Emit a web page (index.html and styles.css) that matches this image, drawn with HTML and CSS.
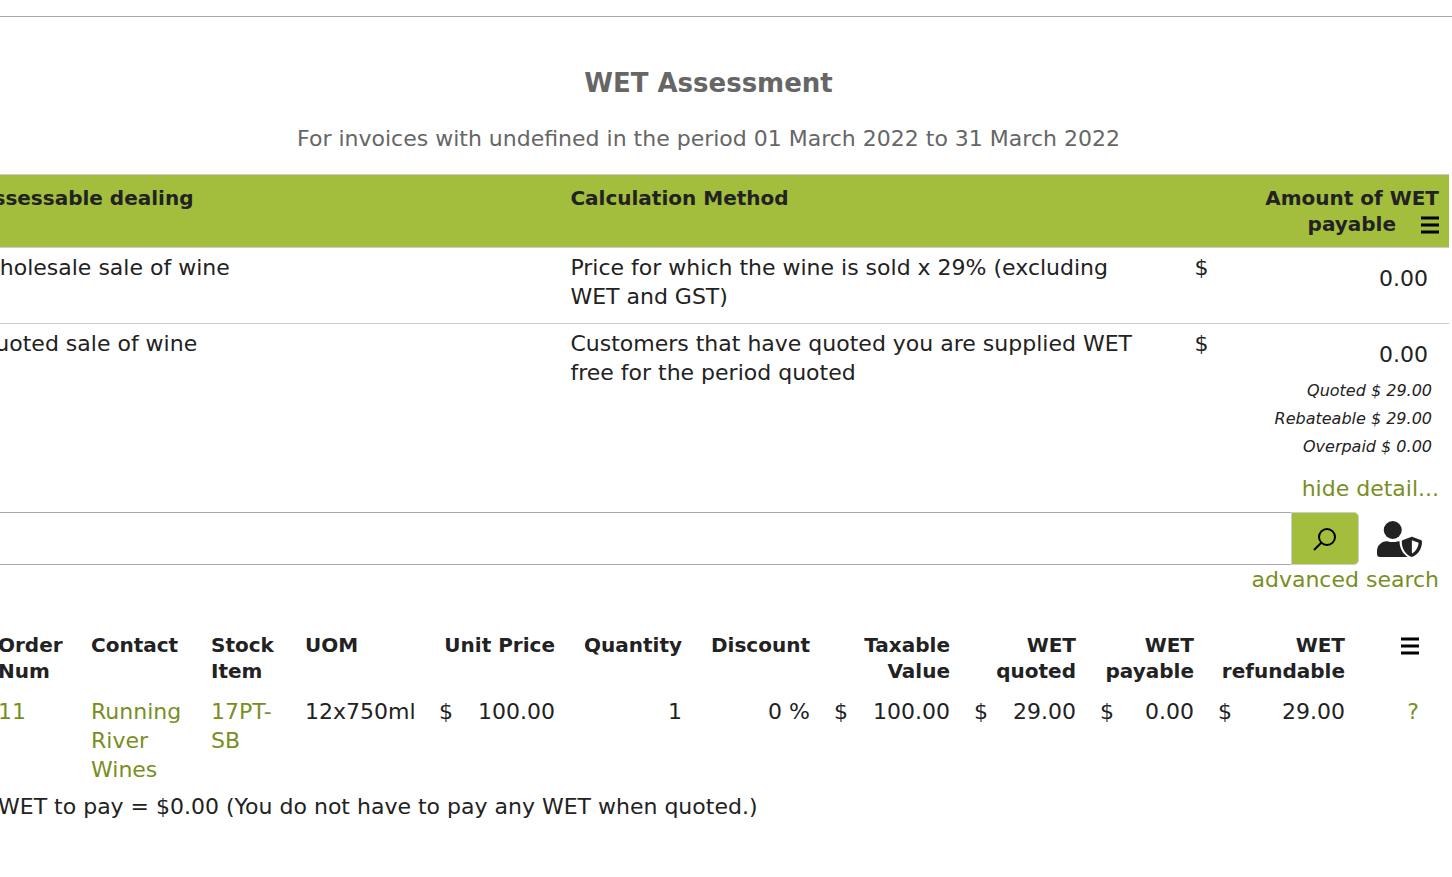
FILE: index.html
```html
<!DOCTYPE html>
<html lang="en">
<head>
    <meta charset="UTF-8">
    <meta name="viewport" content="width=device-width, initial-scale=1.0">
    <title>WET Assessment</title>
    <link rel="stylesheet" href="styles.css">
</head>
<body>
    <hr class="divider">
    <main class="report">
        <h1 class="title">WET Assessment</h1>
        <p class="subtitle">For invoices with undefined in the period 01 March 2022 to 31 March 2022</p>

        <table class="assessment">
            <colgroup>
                <col class="col-dealing">
                <col class="col-method">
                <col>
            </colgroup>
            <thead>
                <tr>
                    <th>Assessable dealing</th>
                    <th>Calculation Method</th>
                    <th class="right">
                        Amount of WET<br>payable
                        <button class="menu-button" type="button" aria-label="Table menu">
                            <svg class="menu-icon" viewBox="0 0 18 18"><path d="M0 2h18M0 9h18M0 16h18"/></svg>
                        </button>
                    </th>
                </tr>
            </thead>
            <tbody>
                <tr>
                    <td>Wholesale sale of wine</td>
                    <td class="method">Price for which the wine is sold x 29% (excluding WET and GST)</td>
                    <td>
                        <div class="money"><span>$</span><span class="amount">0.00</span></div>
                    </td>
                </tr>
                <tr>
                    <td>Quoted sale of wine</td>
                    <td class="method">Customers that have quoted you are supplied WET free for the period quoted</td>
                    <td>
                        <div class="money"><span>$</span><span class="amount">0.00</span></div>
                        <ul class="breakdown">
                            <li>Quoted $ 29.00</li>
                            <li>Rebateable $ 29.00</li>
                            <li>Overpaid $ 0.00</li>
                        </ul>
                        <a class="toggle" href="#detail">hide detail...</a>
                    </td>
                </tr>
            </tbody>
        </table>

        <section class="detail" id="detail">
            <form class="search">
                <input class="search-input" type="text" aria-label="Search">
                <button class="search-button" type="submit" aria-label="Search">
                    <svg class="search-icon" viewBox="0 0 24 24"><circle cx="14" cy="10" r="8"/><path d="M8 16l-7 7"/></svg>
                </button>
                <svg class="user-icon" viewBox="0 0 640 512"><path d="M622.3 271.1l-115.2-45c-4.1-1.6-12.6-3.7-22.2 0l-115.2 45c-10.7 4.2-17.7 14-17.7 24.9 0 111.6 68.7 188.8 132.9 213.9 9.6 3.7 18 1.6 22.2 0C558.4 489.9 640 420.5 640 296c0-10.9-7-20.7-17.7-24.9zM496 462.4V273.3l95.5 37.3c-5.6 87.1-60.9 135.4-95.5 151.8z"/><circle cx="224" cy="128" r="128"/><path d="M140 288C60 288 0 350 0 430v42c0 22 18 40 40 40h394C370 462 322 392 320 288h-20c-48 16-104 16-152 0z"/></svg>
            </form>
            <a class="advanced" href="#">advanced search</a>

            <table class="orders">
                <colgroup>
                    <col class="col-order">
                    <col class="col-contact">
                    <col class="col-stock">
                    <col class="col-uom">
                    <col class="col-price">
                    <col class="col-quantity">
                    <col class="col-discount">
                    <col class="col-taxable">
                    <col class="col-quoted">
                    <col class="col-payable">
                    <col class="col-refundable">
                    <col class="col-menu">
                </colgroup>
                <thead>
                    <tr>
                        <th>Order Num</th>
                        <th>Contact</th>
                        <th>Stock Item</th>
                        <th>UOM</th>
                        <th class="right">Unit Price</th>
                        <th class="right">Quantity</th>
                        <th class="right">Discount</th>
                        <th class="right">Taxable Value</th>
                        <th class="right">WET quoted</th>
                        <th class="right">WET payable</th>
                        <th class="right">WET refundable</th>
                        <th class="right last">
                            <button class="menu-button" type="button" aria-label="Column menu">
                                <svg class="menu-icon" viewBox="0 0 18 18"><path d="M0 2h18M0 9h18M0 16h18"/></svg>
                            </button>
                        </th>
                    </tr>
                </thead>
                <tbody>
                    <tr>
                        <td><a href="#">11</a></td>
                        <td><a href="#">Running River Wines</a></td>
                        <td><a href="#">17PT-SB</a></td>
                        <td>12x750ml</td>
                        <td><div class="price"><span>$</span><span>100.00</span></div></td>
                        <td class="right">1</td>
                        <td class="right">0 %</td>
                        <td><div class="price"><span>$</span><span>100.00</span></div></td>
                        <td><div class="price"><span>$</span><span>29.00</span></div></td>
                        <td><div class="price"><span>$</span><span>0.00</span></div></td>
                        <td><div class="price"><span>$</span><span>29.00</span></div></td>
                        <td class="right last"><a href="#">?</a></td>
                    </tr>
                </tbody>
            </table>
            <p class="total">WET to pay = $0.00 (You do not have to pay any WET when quoted.)</p>
        </section>
    </main>
</body>
</html>
```

FILE: styles.css
```css
* {
    box-sizing: border-box;
}

body {
    margin: 0;
    padding-top: 16px;
    font-family: Verdana, "DejaVu Sans", sans-serif;
    font-size: 22px;
    line-height: 29px;
    color: #222;
    background: #fff;
    overflow-x: hidden;
}

a {
    color: #788f1f;
    text-decoration: none;
}

a:hover {
    text-decoration: underline;
}

.divider {
    margin: 0;
    border: 0;
    border-top: 1px solid #aaa;
}

/* the report is wider than the window and runs off its left edge */
.report {
    margin: 0 3px 0 -32px;
    padding-top: 49px;
}

.title {
    margin: 0;
    font-size: 26px;
    line-height: 34px;
    text-align: center;
    color: #666;
}

.subtitle {
    margin: 24px 0 21px;
    text-align: center;
    color: #666;
}

table {
    width: 100%;
    table-layout: fixed;
    border-collapse: collapse;
}

th,
td {
    padding: 5px 10px;
    text-align: left;
    vertical-align: top;
}

th {
    font-size: 20px;
    line-height: 26px;
}

.right {
    text-align: right;
}

.assessment th {
    padding: 10px;
    background: #a3be3c;
}

.assessment tr {
    border-top: 1px solid #ccc;
}

.assessment .method {
    padding-right: 36px;
}

.col-dealing {
    width: 40%;
}

.col-method {
    width: 42%;
}

.money {
    display: flex;
    justify-content: space-between;
    padding-left: 2px;
}

.amount {
    padding: 11px 11px 25px 0;
}

.breakdown {
    margin: -17px 7px 0 0;
    padding: 0;
    list-style: none;
    font-size: 16px;
    line-height: 28px;
    font-style: italic;
    text-align: right;
}

.toggle {
    display: block;
    margin: 13px 0 4px;
    text-align: right;
}

.menu-button {
    margin-left: 18px;
    padding: 0;
    border: 0;
    background: none;
    vertical-align: -3px;
    cursor: pointer;
}

.menu-icon {
    display: block;
    width: 18px;
    height: 18px;
    fill: none;
    stroke: #000;
    stroke-width: 3;
}

.detail {
    padding: 0 10px 0 20px;
}

.search {
    display: flex;
    align-items: center;
}

.search-input {
    flex: 1;
    height: 53px;
    padding: 0 10px;
    border: 1px solid #aaa;
    border-right: 0;
    font: inherit;
}

.search-button {
    display: flex;
    align-items: center;
    justify-content: center;
    width: 68px;
    height: 53px;
    padding: 0;
    border: 1px solid #ccc;
    border-radius: 0 5px 5px 0;
    background: #a3be3c;
    cursor: pointer;
}

.search-icon {
    width: 24px;
    height: 24px;
    fill: none;
    stroke: #000;
    stroke-width: 2;
}

.user-icon {
    width: 45px;
    height: 36px;
    margin: 0 17px 0 18px;
    fill: #222;
}

.advanced {
    display: block;
    margin-bottom: 33px;
    text-align: right;
}

.orders th {
    padding-bottom: 8px;
}

.col-order { width: 93px; }
.col-contact { width: 120px; }
.col-stock { width: 94px; }
.col-uom { width: 130px; }
.col-price { width: 140px; }
.col-quantity { width: 127px; }
.col-discount { width: 128px; }
.col-taxable { width: 140px; }
.col-quoted { width: 126px; }
.col-payable { width: 118px; }
.col-refundable { width: 151px; }
.col-menu { width: 84px; }

.price {
    display: flex;
    justify-content: space-between;
    padding-left: 4px;
}

.orders .last {
    padding-right: 20px;
}

.total {
    margin: 3px 0 0;
    padding: 0 10px;
}
```
